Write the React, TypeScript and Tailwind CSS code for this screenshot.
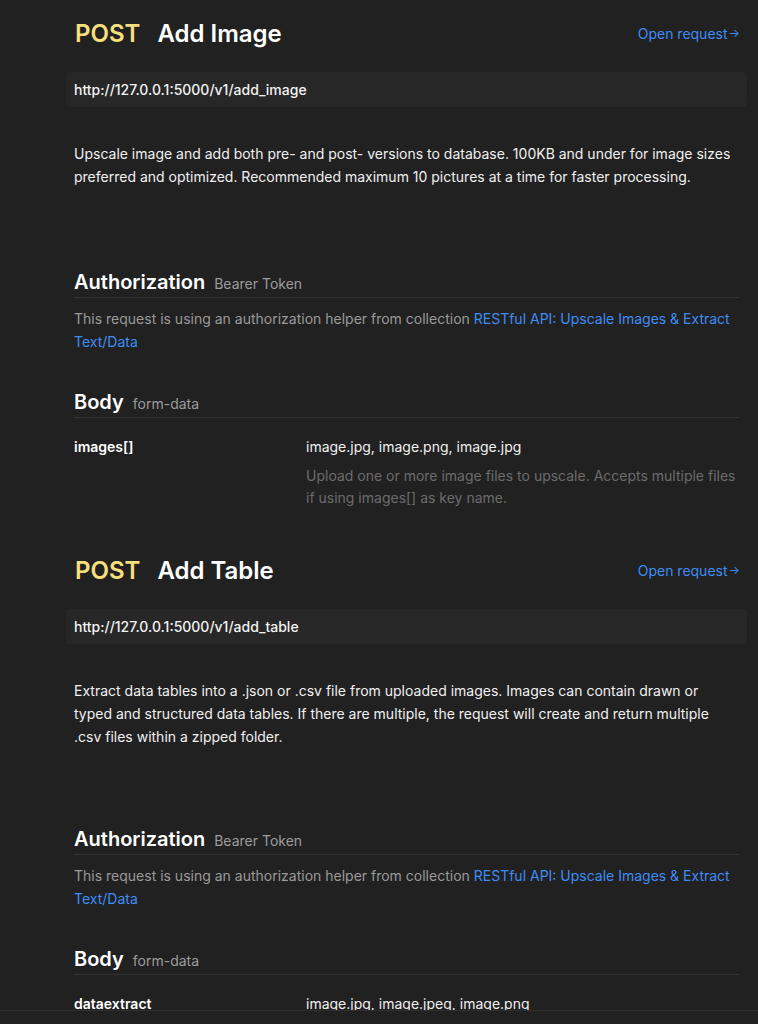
import React from "react";

type Field = { key: string; value: string; desc?: string };
type Endpoint = {
  method: string;
  title: string;
  url: string;
  desc: string;
  authGap: string;
  fields: Field[];
};

const endpoints: Endpoint[] = [
  {
    method: "POST",
    title: "Add Image",
    url: "http://127.0.0.1:5000/v1/add_image",
    desc: "Upscale image and add both pre- and post- versions to database. 100KB and under for image sizes preferred and optimized. Recommended maximum 10 pictures at a time for faster processing.",
    authGap: "mt-[78px]",
    fields: [
      {
        key: "images[]",
        value: "image.jpg, image.png, image.jpg",
        desc: "Upload one or more image files to upscale. Accepts multiple files if using images[] as key name.",
      },
    ],
  },
  {
    method: "POST",
    title: "Add Table",
    url: "http://127.0.0.1:5000/v1/add_table",
    desc: "Extract data tables into a .json or .csv file from uploaded images. Images can contain drawn or typed and structured data tables. If there are multiple, the request will create and return multiple .csv files within a zipped folder.",
    authGap: "mt-[75px]",
    fields: [
      {
        key: "dataextract",
        value: "image.jpg, image.jpeg, image.png",
        desc: "Upload one or more images containing data tables.",
      },
    ],
  },
];

function Section({ ep, first }: { ep: Endpoint; first: boolean }) {
  return (
    <section className={first ? "" : "mt-[44px]"}>
      <div className="mt-[16px] flex items-center justify-between h-[36px]">
        <div className="flex items-center gap-[17px] text-[24px] leading-[36px] font-semibold">
          <span className="text-[#f7e07c] pl-[1px]">{ep.method}</span>
          <span className="text-white">{ep.title}</span>
        </div>
        <a className="text-[14px] text-[#3e8df5] flex items-center -mt-[2px] -mr-[1px]">
          Open request<span className="text-[12px] ml-[1px]">→</span>
        </a>
      </div>
      <div className="mt-[20px] -mx-[8px] h-[35px] rounded-[4px] bg-[#272727] px-[8px] flex items-center text-[14px] font-medium text-[#f2f2f2]">
        {ep.url}
      </div>
      <p className="mt-[35px] text-[14px] leading-[23px] text-[#f0f0f0]">{ep.desc}</p>

      <div className={`${ep.authGap} h-[32px] border-b border-[#323232] flex items-center gap-[9px]`}>
        <h3 className="text-[20px] font-semibold text-white leading-[30px]">Authorization</h3>
        <span className="text-[14px] text-[#9c9c9c] mt-[4px]">Bearer Token</span>
      </div>
      <p className="mt-[9px] text-[14px] leading-[23px] text-[#9a9a9a]">
        This request is using an authorization helper from collection{" "}
        <a className="text-[#3e8df5]">RESTful API: Upscale Images &amp; Extract Text/Data</a>
      </p>

      <div className="mt-[33px] h-[32px] border-b border-[#323232] flex items-center gap-[9px]">
        <h3 className="text-[20px] font-semibold text-white leading-[30px]">Body</h3>
        <span className="text-[14px] text-[#9c9c9c] mt-[4px]">form-data</span>
      </div>
      {ep.fields.map((f) => (
        <div key={f.key} className="mt-[17px] grid grid-cols-[232px_1fr] text-[14px]">
          <div className="font-semibold text-white leading-[23px]">{f.key}</div>
          <div>
            <div className="text-[#f0f0f0] leading-[23px]">{f.value}</div>
            {f.desc && (
              <p className="mt-[7px] leading-[22px] text-[#6c6c6c]">{f.desc}</p>
            )}
          </div>
        </div>
      ))}
    </section>
  );
}

export default function App() {
  return (
    <div
      className="h-screen bg-[#212121] overflow-hidden"
      style={{ fontFamily: "Inter, 'Noto Sans', sans-serif" }}
    >
      <div className="pl-[74px] pr-[19px] pb-[40px]">
        {endpoints.map((ep, i) => (
          <Section key={ep.title} ep={ep} first={i === 0} />
        ))}
      </div>
      <div className="fixed bottom-0 left-0 right-0 h-[14px] bg-[#212121] border-t border-[#2f2f2f]" />
    </div>
  );
}
